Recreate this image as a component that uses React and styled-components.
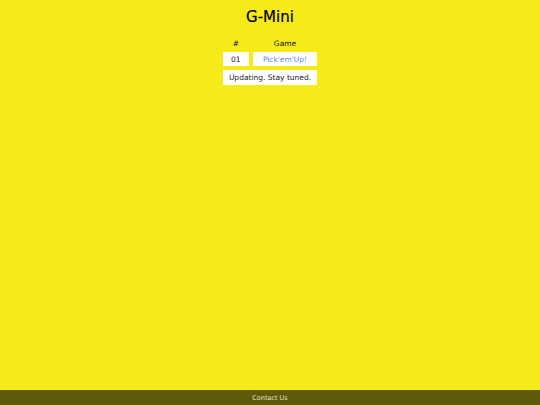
import styled, { createGlobalStyle } from 'styled-components';

const Global = createGlobalStyle`
	html, body {
		margin: 0;
		padding: 0;
	}
	body {
		background-color: #f7ea19;
		font-family: 'DejaVu Sans', 'Noto Sans', sans-serif;
	}
`;

const Page = styled.div`
	min-height: 100vh;
	display: flex;
	flex-direction: column;
	background-color: #f7ea19;
`;

const Main = styled.main`
	flex: 1;
	display: flex;
	flex-direction: column;
	align-items: center;
	padding-top: 8px;
`;

const Title = styled.h1`
	margin: 0;
	font-size: 15px;
	font-weight: 500;
	color: #000;
	line-height: 18px;
	-webkit-text-stroke: 0.2px #000;
`;

const Table = styled.table`
	margin-top: 8px;
	border-spacing: 4px;
	font-size: 7.5px;
	color: #222;

	th {
		font-weight: 500;
		height: 10px;
		padding: 0;
		color: #111;
	}

	td {
		background-color: white;
		height: 14px;
		padding: 0 6px;
		text-align: center;
	}

	tbody tr + tr td {
		height: 15px;
	}

	td.num {
		width: 14px;
	}

	a {
		color: #5b8ce0;
		text-decoration: none;
	}
`;

const Footer = styled.footer`
	height: 15px;
	background-color: #5f5a0a;
	color: #e6e3c4;
	font-size: 6.5px;
	display: flex;
	align-items: center;
	justify-content: center;
`;

const App = () => {
	return (
		<Page>
			<Global />
			<Main>
				<Title>G-Mini</Title>
				<Table>
					<thead>
						<tr>
							<th>#</th>
							<th>Game</th>
						</tr>
					</thead>
					<tbody>
						<tr>
							<td className='num'>01</td>
							<td>
								<a href='#'>Pick'em'Up!</a>
							</td>
						</tr>
						<tr>
							<td colSpan={2}>Updating. Stay tuned.</td>
						</tr>
					</tbody>
				</Table>
			</Main>
			<Footer>Contact Us</Footer>
		</Page>
	);
};

export default App;
